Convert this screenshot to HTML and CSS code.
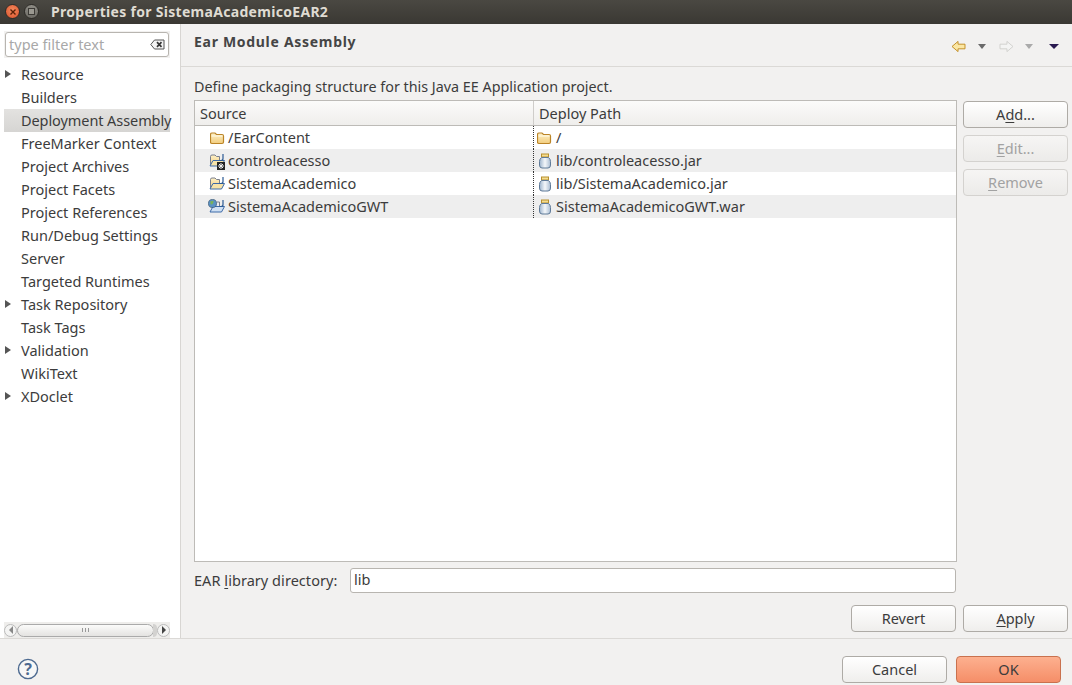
FILE: index.html
```html
<!DOCTYPE html>
<html lang="en">
<head>
<meta charset="utf-8">
<title>Properties for SistemaAcademicoEAR2</title>
<link rel="stylesheet" href="styles.css">
</head>
<body>
<svg class="defs" width="0" height="0" aria-hidden="true">
  <defs>
    <linearGradient id="fold" x1="0" y1="0" x2="0" y2="1"><stop offset="0" stop-color="#fdf0c6"/><stop offset="1" stop-color="#f2cd7e"/></linearGradient>
    <linearGradient id="jar" x1="0" y1="0" x2="1" y2="0"><stop offset="0" stop-color="#9db4cd"/><stop offset=".5" stop-color="#f4f7fa"/><stop offset="1" stop-color="#a9bcd2"/></linearGradient>
    <symbol id="folder" viewBox="1 0 16 16">
      <path d="M1.5 4.5 Q1.5 3 3 3 H6 L7.5 4.5 H13 Q14.5 4.5 14.5 6 V12 Q14.5 13.5 13 13.5 H3 Q1.5 13.5 1.5 12 Z" fill="url(#fold)" stroke="#bb8427" stroke-width="1.2"/>
      <path d="M2.5 6 H13.5" stroke="#fffbe9"/>
    </symbol>
    <symbol id="jarIcon" viewBox="0 0 16 16">
      <rect x="4.5" y="1" width="7" height="3" fill="#f4dc8f" stroke="#b78f2e"/>
      <path d="M4.5 4.5 Q2.5 6 2.5 8.5 V12 Q2.5 15 5 15 H11 Q13.5 15 13.5 12 V8.5 Q13.5 6 11.5 4.5 Z" fill="url(#jar)" stroke="#5f7a98"/>
    </symbol>
    <symbol id="project" viewBox="0 0 18 16">
      <path d="M2.5 3.5 Q2.5 2 4 2 H7 L8.5 3.5 H11.5 V12.5 H2.5 Z" fill="url(#fold)" stroke="#7a7f8c"/>
      <path d="M2 13 L5 7.5 H16.5 L13.5 13 Z" fill="#f7e3a8" stroke="#3d6aa8"/>
      <path d="M15 1 V5.5 Q15 7.5 13 7.5 H11.5" fill="none" stroke="#2c5a94" stroke-width="1.2"/>
    </symbol>
    <symbol id="webproject" viewBox="0 0 18 16">
      <path d="M2 13 L5 7.5 H16.5 L13.5 13 Z" fill="#cfe0f3" stroke="#3d6aa8"/>
      <path d="M15 1 V5.5 Q15 7.5 13 7.5 H11.5" fill="none" stroke="#2c5a94" stroke-width="1.2"/>
      <path d="M9 3 H11.5 V7" fill="none" stroke="#7a7f8c"/>
    </symbol>
    <symbol id="back" viewBox="0 0 16 14">
      <path d="M1 7 L7.5 1.5 V4.5 H15 V9.5 H7.5 V12.5 Z" fill="currentColor" stroke="var(--edge)" stroke-linejoin="round"/>
    </symbol>
  </defs>
</svg>
<div class="window">
  <header class="titlebar">
    <span class="wbtn close"><svg viewBox="0 0 8 8" class="x"><path d="M1.5 1.5 L6.5 6.5 M6.5 1.5 L1.5 6.5"/></svg></span>
    <span class="wbtn mini"><span class="square"></span></span>
    <span class="wintitle">Properties for SistemaAcademicoEAR2</span>
  </header>
  <div class="main">
    <aside class="sidebar">
      <div class="filter">
        <div class="filterbox">
          <span class="placeholder">type filter text</span>
          <svg class="clear" viewBox="0 0 15 11"><path d="M.8 5.5 L4.5 1 H14 V10 H4.5 Z" fill="#f3f3f3" stroke="#555"/><path d="M7 3.2 L11.5 7.8 M11.5 3.2 L7 7.8" stroke="#333" stroke-width="1.7"/></svg>
        </div>
      </div>
      <ul class="tree">
        <li class="node parent">Resource</li>
        <li class="node">Builders</li>
        <li class="node selected">Deployment Assembly</li>
        <li class="node">FreeMarker Context</li>
        <li class="node">Project Archives</li>
        <li class="node">Project Facets</li>
        <li class="node">Project References</li>
        <li class="node">Run/Debug Settings</li>
        <li class="node">Server</li>
        <li class="node">Targeted Runtimes</li>
        <li class="node parent">Task Repository</li>
        <li class="node">Task Tags</li>
        <li class="node parent">Validation</li>
        <li class="node">WikiText</li>
        <li class="node parent">XDoclet</li>
      </ul>
      <div class="hscroll">
        <span class="arrow"><i class="tri left"></i></span>
        <span class="thumb"><span class="grip"></span></span>
        <span class="thumbend"></span>
        <span class="arrow"><i class="tri right"></i></span>
      </div>
    </aside>
    <section class="content">
      <div class="pagehead">
        <h1 class="pagetitle">Ear Module Assembly</h1>
        <div class="navtools">
          <svg class="nav back"><use href="#back"/></svg>
          <i class="drop dark"></i>
          <svg class="nav fwd"><use href="#back"/></svg>
          <i class="drop light"></i>
          <i class="drop menu"></i>
        </div>
      </div>
      <div class="pagebody">
        <p class="desc">Define packaging structure for this Java EE Application project.</p>
        <div class="tablerow">
          <div class="table">
            <div class="thead">
              <div class="cell c1">Source</div>
              <div class="cell c2">Deploy Path</div>
            </div>
            <div class="row">
              <div class="cell c1 indent"><svg class="ico"><use href="#folder"/></svg>/EarContent</div>
              <div class="cell c2"><svg class="ico"><use href="#folder"/></svg>/</div>
            </div>
            <div class="row alt">
              <div class="cell c1"><span class="stack"><svg class="ico wide"><use href="#project"/></svg><svg class="badge" viewBox="0 0 8 8"><rect width="8" height="8" fill="#222"/><path d="M4 1 V7 M1 4 H7 M2 2 L6 6 M6 2 L2 6" stroke="#eee"/></svg></span>controleacesso</div>
              <div class="cell c2"><svg class="ico"><use href="#jarIcon"/></svg>lib/controleacesso.jar</div>
            </div>
            <div class="row">
              <div class="cell c1"><svg class="ico wide"><use href="#project"/></svg>SistemaAcademico</div>
              <div class="cell c2"><svg class="ico"><use href="#jarIcon"/></svg>lib/SistemaAcademico.jar</div>
            </div>
            <div class="row alt">
              <div class="cell c1"><span class="stack"><svg class="ico wide"><use href="#webproject"/></svg><svg class="globe" viewBox="0 0 8 8"><circle cx="4" cy="4" r="3.6" fill="#5b93c4" stroke="#34506e" stroke-width=".6"/><path d="M2 2 L5 1.5 L4.5 4 L2.5 5 Z" fill="#7ab35a"/></svg></span>SistemaAcademicoGWT</div>
              <div class="cell c2"><svg class="ico"><use href="#jarIcon"/></svg>SistemaAcademicoGWT.war</div>
            </div>
          </div>
          <div class="sidebtns">
            <button class="btn">A<u>d</u>d...</button>
            <button class="btn off"><u>E</u>dit...</button>
            <button class="btn off"><u>R</u>emove</button>
          </div>
        </div>
        <div class="earrow">
          <label class="earlabel">EAR <u>l</u>ibrary directory:</label>
          <div class="textinput">lib</div>
        </div>
        <div class="applyrow">
          <button class="btn">Revert</button>
          <button class="btn"><u>A</u>pply</button>
        </div>
      </div>
    </section>
  </div>
  <footer class="footer">
    <svg class="help" viewBox="0 0 22 22"><circle cx="11" cy="11" r="9.6" fill="#f7f7f7" stroke="#4d6a90" stroke-width="1.4"/><text x="11" y="16.5" text-anchor="middle" class="helpq">?</text></svg>
    <div class="footbtns">
      <button class="btn">Cancel</button>
      <button class="btn ok">OK</button>
    </div>
  </footer>
</div>
</body>
</html>
```

FILE: styles.css
```css
* { box-sizing: border-box; }
html, body { margin: 0; padding: 0; }
body {
  width: 1072px; height: 685px; overflow: hidden;
  background: #f2f1f0; color: #3c3c3c;
  font-family: "Noto Sans", "Open Sans", sans-serif; font-size: 14.5px;
}
.defs { position: absolute; }
u { text-underline-offset: 2px; }
.window { display: flex; flex-direction: column; height: 685px; }

.titlebar {
  height: 24px; flex: none; display: flex; align-items: center; padding: 0 0 1px 5px;
  background: linear-gradient(#4a4842, #3a3833);
}
.wbtn { width: 15px; height: 15px; border-radius: 50%; display: flex; align-items: center; justify-content: center; margin-right: 4px; }
.close { background: radial-gradient(circle at 50% 40%, #f38a5e, #d9502a); border: 1px solid #2e2c28; }
.x { width: 8px; height: 8px; fill: none; stroke: #5a2008; stroke-width: 1.4; }
.mini { background: linear-gradient(#8d8b84, #6e6c66); border: 1px solid #2e2c28; }
.square { width: 7px; height: 7px; border: 1px solid #3c3a36; background: #9b9991; }
.wintitle { margin-left: 8px; color: #dfdbd2; font-weight: 700; font-size: 14px; letter-spacing: .3px; white-space: nowrap; }

.main { flex: 1; display: flex; min-height: 0; }
.sidebar { width: 181px; flex: none; background: #fff; border-right: 1px solid #d8d6d3; display: flex; flex-direction: column; padding: 0 10px 0 4px; background-clip: padding-box; }
.filter { background: #f2f1f0; margin-top: 7px; height: 27px; padding: 1px 0 0 1px; }
.filterbox { height: 25px; width: 164px; background: #fff; border: 1px solid #b8b5b0; border-radius: 3px; display: flex; align-items: center; padding: 0 3px; justify-content: space-between; }
.placeholder { color: #a8a8a8; padding-bottom: 2px; }
.clear { width: 15px; height: 11px; }
.tree { list-style: none; margin: 5px 0 0; padding: 0; flex: 1; }
.node { height: 23px; line-height: 22px; padding-left: 17px; white-space: nowrap; position: relative; }
.parent::before { content: ""; position: absolute; left: 1px; top: 7px; border-left: 6px solid #555; border-top: 4px solid transparent; border-bottom: 4px solid transparent; }
.selected { background: linear-gradient(#e3e2e0, #d6d5d3); letter-spacing: -.08px; }
.hscroll { height: 16px; flex: none; background: #eeedeb; display: flex; align-items: center; }
.arrow { width: 13px; height: 13px; flex: none; border: 1px solid #bbb; border-radius: 50%; background: #f4f4f3; display: flex; align-items: center; justify-content: center; }
.tri { display: block; border-top: 4px solid transparent; border-bottom: 4px solid transparent; }
.tri.left { border-right: 4px solid #888; }
.tri.right { border-left: 4px solid #444; }
.thumb { flex: 1; height: 13px; margin-left: 0; border: 1px solid #aaa; border-radius: 7px; background: linear-gradient(#fbfbfa, #e4e3e1); display: flex; align-items: center; justify-content: center; }
.thumbend { width: 4px; height: 13px; flex: none; margin-left: -1px; border-radius: 0 6px 6px 0; background: #d3d2d0; }
.grip { width: 7px; height: 4px; background: repeating-linear-gradient(90deg, #999 0 1px, transparent 1px 3px); }

.content { flex: 1; display: flex; flex-direction: column; min-width: 0; }
.pagehead { height: 43px; flex: none; border-bottom: 1px solid #dbd9d6; display: flex; justify-content: space-between; padding: 9px 13px 0 13px; }
.pagetitle { margin: 0; font-size: 14px; font-weight: 700; color: #454545; letter-spacing: .7px; line-height: 18px; }
.navtools { display: flex; align-items: flex-start; padding-top: 7px; }
.nav { width: 15px; height: 13px; }
.back { color: #fbe7a4; --edge: #c08a1e; }
.fwd { color: #f4f4f3; --edge: #cfcfcc; margin-left: 13px; transform: scaleX(-1); }
.drop { display: block; margin-top: 4px; border-left: 4px solid transparent; border-right: 4px solid transparent; border-top: 5px solid #6a6a6a; }
.drop.dark { margin-left: 12px; }
.drop.light { border-top-color: #aaa; margin-left: 11px; }
.drop.menu { border-top-color: #2a1a50; margin-left: 16px; border-left-width: 5px; border-right-width: 5px; }

.pagebody { flex: 1; display: flex; flex-direction: column; padding: 10px 4px 6px 13px; }
.desc { margin: 0 0 4px; height: 19px; line-height: 19px; font-size: 14.33px; }
.tablerow { display: flex; gap: 6px; height: 462px; flex: none; }
.table { width: 763px; flex: none; background: #fff; border: 1px solid #bdbbb7; }
.thead { display: flex; height: 25px; background: linear-gradient(#fbfbfa, #efeeec); border-bottom: 1px solid #bdbbb7; }
.row { display: flex; height: 23px; }
.alt { background: #eeeeee; }
.cell { display: flex; align-items: center; white-space: nowrap; padding-left: 5px; }
.row .cell { padding-bottom: 2px; }
.row .ico { margin-top: 2px; }
.c1 { width: 338px; flex: none; padding-left: 13px; }
.c2 { flex: 1; border-left: 1px dotted #333; padding-left: 3px; }
.thead .c1 { padding-left: 5px; }
.thead .c2 { border-left: 1px solid #cfcdca; padding-left: 5px; }
.c1.indent { padding-left: 15px; }
.ico { width: 16px; height: 16px; margin-right: 3px; flex: none; }
.indent .ico { margin-right: 2px; }
.c1 .ico.wide { width: 18px; margin-right: 2px; }
.stack { position: relative; display: flex; }
.badge { position: absolute; left: 9px; top: 11px; width: 8px; height: 8px; }
.globe { position: absolute; left: 0; top: 2px; width: 9px; height: 9px; }

.sidebtns { display: flex; flex-direction: column; gap: 7px; padding-top: 1px; }
.btn {
  width: 105px; height: 27px; padding: 0 0 2px; border: 1px solid #aeaba6; border-radius: 4px;
  background: linear-gradient(#fff, #efeeec); color: #3c3c3c;
  font: inherit;
}
.btn.off { color: #a2a2a2; border-color: #d4d2cf; background: linear-gradient(#f6f5f4, #ecebe9); }
.btn.ok { background: linear-gradient(#fdb08f, #f58e68); border-color: #c9714e; }

.earrow { display: flex; align-items: center; margin-top: 6px; height: 25px; }
.earlabel { width: 156px; flex: none; letter-spacing: .05px; padding-bottom: 2px; }
.textinput { width: 606px; height: 25px; background: #fff; border: 1px solid #b8b5b0; border-radius: 3px; line-height: 21px; padding-left: 3px; }
.applyrow { display: flex; justify-content: flex-end; gap: 7px; margin-top: 12px; }

.footer { height: 47px; flex: none; border-top: 1px solid #dbd9d6; display: flex; justify-content: space-between; padding: 17px 11px 0 17px; }
.help { width: 22px; height: 22px; margin-top: 2px; }
.helpq { font: 700 16px "Noto Sans", sans-serif; fill: #4d6a90; }
.footbtns { display: flex; gap: 9px; }
```
